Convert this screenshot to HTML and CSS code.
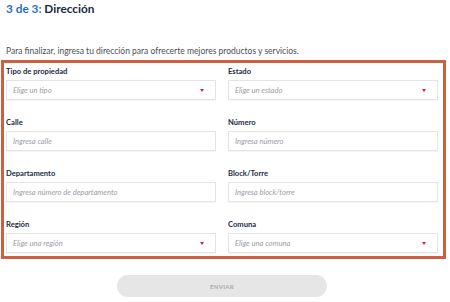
FILE: index.html
```html
<!DOCTYPE html>
<html lang="es">
<head>
  <meta charset="UTF-8">
  <title>Dirección</title>
  <link rel="stylesheet" href="styles.css">
</head>
<body>
  <div class="page">
    <h1 class="title"><span class="step">3 de 3:</span> Dirección</h1>
    <p class="intro">Para finalizar, ingresa tu dirección para ofrecerte mejores productos y servicios.</p>
    <form class="form-box">
      <div class="field">
        <label>Tipo de propiedad</label>
        <div class="input select"><span class="ph">Elige un tipo</span><span class="caret"></span></div>
      </div>
      <div class="field">
        <label>Estado</label>
        <div class="input select"><span class="ph">Elige un estado</span><span class="caret"></span></div>
      </div>
      <div class="field">
        <label>Calle</label>
        <div class="input"><span class="ph">Ingresa calle</span></div>
      </div>
      <div class="field">
        <label>Número</label>
        <div class="input"><span class="ph">Ingresa número</span></div>
      </div>
      <div class="field">
        <label>Departamento</label>
        <div class="input"><span class="ph">Ingresa número de departamento</span></div>
      </div>
      <div class="field">
        <label>Block/Torre</label>
        <div class="input"><span class="ph">Ingresa block/torre</span></div>
      </div>
      <div class="field">
        <label>Región</label>
        <div class="input select"><span class="ph">Elige una región</span><span class="caret"></span></div>
      </div>
      <div class="field">
        <label>Comuna</label>
        <div class="input select"><span class="ph">Elige una comuna</span><span class="caret"></span></div>
      </div>
    </form>
    <div class="actions">
      <button type="button" class="btn" disabled>ENVIAR</button>
    </div>
  </div>
</body>
</html>
```

FILE: styles.css
```css
* { box-sizing: border-box; }
body { margin: 0; background: #fff; font-family: Lato, "Open Sans", sans-serif; color: #1b2a45; }
.page { width: 450px; height: 302px; padding: 1px 4px 0 1px; overflow: hidden; }
.title { margin: 0 0 0 5px; font-size: 11.8px; font-weight: 700; line-height: 15px; color: #1b2a45; }
.step { color: #1f6fc4; }
.intro { margin: 29px 0 0 5px; font-size: 8.5px; line-height: 12px; color: #4a4f57; }
.form-box { margin-top: 3px; border: 3px solid #cc6141; padding: 3px 5px 3px 2px; display: grid; grid-template-columns: 1fr 1fr; column-gap: 12px; row-gap: 17px; }
.field { display: flex; flex-direction: column; }
.field label { font-size: 7.6px; font-weight: 700; line-height: 11px; height: 14px; color: #1b2a45; }
.input { height: 20px; border: 1px solid #e4e4e4; box-shadow: 0 1px 1px rgba(0,0,0,0.04); background: #fff; display: flex; align-items: center; padding: 0 11px 0 6px; }
.ph { font-size: 7.6px; font-style: italic; color: #9a9ea4; flex: 1; }
.caret { width: 0; height: 0; border-left: 2.5px solid transparent; border-right: 2.5px solid transparent; border-top: 3px solid #d3203f; }
.actions { display: flex; padding: 16px 0 0 116px; }
.btn { width: 210px; height: 22px; border: none; border-radius: 11px; background: #e6e6e6; color: #a9a9a9; font-family: Lato, sans-serif; font-size: 6px; font-weight: 700; letter-spacing: 0.3px; }
```
